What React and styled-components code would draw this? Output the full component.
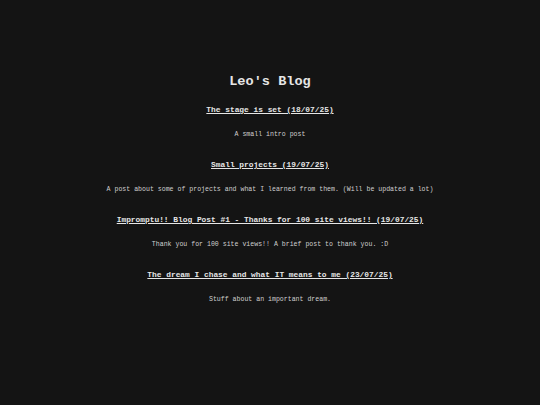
import React from 'react'
import styled, { createGlobalStyle } from 'styled-components'

const posts = [
    { title: 'The stage is set (18/07/25)', blurb: 'A small intro post' },
    { title: 'Small projects (19/07/25)', blurb: 'A post about some of projects and what I learned from them. (Will be updated a lot)' },
    { title: 'Impromptu!! Blog Post #1 - Thanks for 100 site views!! (19/07/25)', blurb: 'Thank you for 100 site views!! A brief post to thank you. :D' },
    { title: 'The dream I chase and what IT means to me (23/07/25)', blurb: 'Stuff about an important dream.' },
]

function App(){
    return(
        <>
        <Global />
        <Page>
            <Title>Leo's Blog</Title>
            {posts.map((p) => (
                <Post key={p.title}>
                    <PostLink href="#">{p.title}</PostLink>
                    <Blurb>{p.blurb}</Blurb>
                </Post>
            ))}
        </Page>
        </>
    );
}

export default App

const Global = createGlobalStyle`
    html, body{
        margin:0;
        padding:0;
        background:#141414;
    }
    body{
        font-family:"Courier New", "Nimbus Mono PS", "FreeMono", "Liberation Mono", monospace;
        color:#e0e0e0;
    }
`;

const Page = styled.div`
    width:540px;
    height:405px;
    display:flex;
    flex-direction:column;
    align-items:center;
    padding-top:72px;
    box-sizing:border-box;
`;

const Title = styled.h1`
    margin:0 0 13px 0;
    font-size:13.6px;
    line-height:20px;
    font-weight:bold;
    color:#e6e6e6;
`;

const Post = styled.div`
    display:flex;
    flex-direction:column;
    align-items:center;
    gap:15px;
    margin-bottom:20px;
`;

const PostLink = styled.a`
    font-size:7.87px;
    line-height:10px;
    font-weight:bold;
    color:#e6e6e6;
    text-decoration:underline;
`;

const Blurb = styled.p`
    margin:0;
    font-size:6.57px;
    line-height:10px;
    color:#cfcfcf;
`;
